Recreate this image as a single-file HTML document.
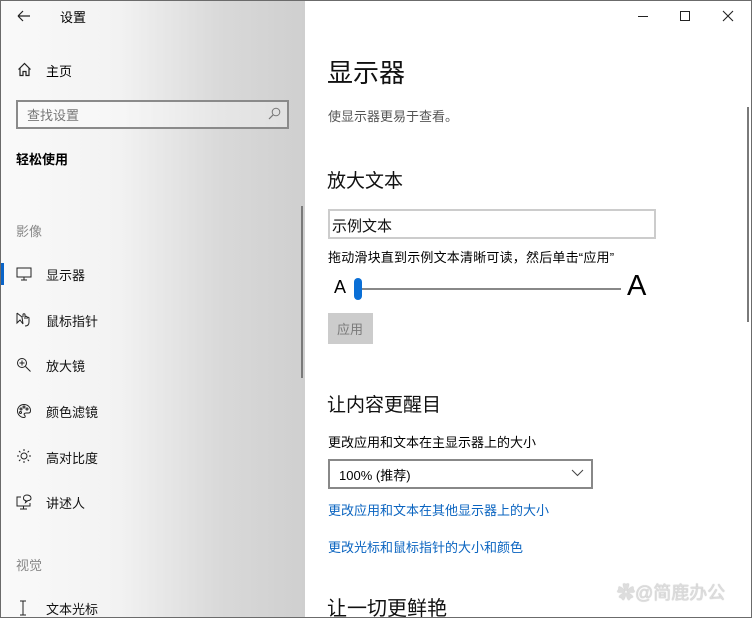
<!DOCTYPE html>
<html><head><meta charset="utf-8"><style>
*{margin:0;padding:0;box-sizing:border-box}
body{width:752px;height:618px;overflow:hidden;font-family:"Liberation Sans","Noto Sans CJK SC",sans-serif;background:#fff;position:relative;color:#000}
.frame{position:absolute;inset:0;border:1px solid #6b6b6b;z-index:10;pointer-events:none}
.side{position:absolute;left:0;top:0;width:305px;height:618px;background:linear-gradient(90deg,#fafafa 0px,#f2f2f2 120px,#d9d9d9 220px,#cfcfcf 305px)}
.t{position:absolute;white-space:nowrap}
.s13{font-size:13px}
.gray{color:#777}
.nav{position:absolute;left:46px;font-size:13px;color:#111}
.ic{position:absolute;left:16px}
</style></head><body>
<div class="frame"></div>
<div class="side"></div>
<svg class="ic" style="left:17px;top:10px" width="14" height="12" viewBox="0 0 14 12"><path d="M1 6H13M1 6L6 1M1 6L6 11" stroke="#222" stroke-width="1.2" fill="none"/></svg>
<div class="t s13" style="left:60px;top:7px">设置</div>
<svg class="ic" style="left:17px;top:62px" width="15" height="15" viewBox="0 0 15 15"><path d="M1.5 7.5L7.5 1.5L13.5 7.5M3 6V13.5H6V9.5H9V13.5H12V6" stroke="#222" stroke-width="1.2" fill="none"/></svg>
<div class="t s13" style="left:46px;top:61px">主页</div>
<div style="position:absolute;left:16px;top:100px;width:273px;height:29px;border:2px solid #8a8a8a;background:rgba(255,255,255,.35)"></div>
<div class="t s13 gray" style="left:27px;top:105px">查找设置</div>
<svg style="position:absolute;left:268px;top:107px" width="13" height="13" viewBox="0 0 13 13"><circle cx="8" cy="5" r="3.8" stroke="#777" fill="none"/><path d="M5.3 7.7L1 12" stroke="#777" stroke-width="1.2"/></svg>
<div class="t s13" style="left:16px;top:149px;font-weight:bold">轻松使用</div>
<div class="t s13 gray" style="left:16px;top:221px;color:#888">影像</div>
<div style="position:absolute;left:0;top:263px;width:4px;height:22px;background:#0a64c8"></div>
<svg class="ic" style="top:267px" width="16" height="14" viewBox="0 0 16 14"><rect x="1" y="1" width="14" height="9" stroke="#222" fill="none"/><path d="M8 10V13M5 13H11" stroke="#222"/></svg>
<div class="nav" style="top:265px">显示器</div>
<svg class="ic" style="top:312px" width="17" height="15" viewBox="0 0 17 15"><path d="M1 1L1 11L4 8L7 12L6 5L1 1M7 5V2.5C7 1.5 9 1.5 9 2.5V7M9 5C9 4 11 4 11 5V7M11 6C11 5 13 5 13 6V10C13 13 11 14 9 14" stroke="#222" fill="none"/></svg>
<div class="nav" style="top:311px">鼠标指针</div>
<svg class="ic" style="top:357px" width="16" height="16" viewBox="0 0 16 16"><circle cx="6" cy="6" r="4.5" stroke="#222" fill="none"/><path d="M9.5 9.5L14.5 14.5M6 3.5V8.5M3.5 6H8.5" stroke="#222"/></svg>
<div class="nav" style="top:356px">放大镜</div>
<svg class="ic" style="top:403px" width="16" height="16" viewBox="0 0 16 16"><path d="M8 1.5C4 1.5 1.5 4.5 1.5 8C1.5 11.5 4.5 14.5 8 14.5C9.5 14.5 9.5 13 8.5 12C7.5 11 8.5 10 10 10H12.5C14 10 14.5 9 14.5 7.5C14.5 4 11.5 1.5 8 1.5Z" stroke="#222" fill="none"/><circle cx="5" cy="6" r="1" stroke="#222" fill="none"/><circle cx="8" cy="4" r="1" stroke="#222" fill="none"/><circle cx="11" cy="6" r="1" stroke="#222" fill="none"/><circle cx="4.5" cy="9.5" r="1" stroke="#222" fill="none"/></svg>
<div class="nav" style="top:402px">颜色滤镜</div>
<svg class="ic" style="top:448px" width="16" height="16" viewBox="0 0 16 16"><circle cx="8" cy="8" r="3" stroke="#222" fill="none"/><path d="M8 1V3M8 13V15M1 8H3M13 8H15M3 3L4.4 4.4M11.6 11.6L13 13M3 13L4.4 11.6M11.6 4.4L13 3" stroke="#222"/></svg>
<div class="nav" style="top:448px">高对比度</div>
<svg class="ic" style="top:494px" width="17" height="16" viewBox="0 0 17 16"><path d="M5 3H1V12H14V9M7.5 12V15M4 15H11" stroke="#222" fill="none"/><path d="M11 1C8.5 1 7.5 2.5 7.5 4C7.5 5.5 8.5 6.5 10 6.5L9.5 8.5L12 6.5C14 6.5 15 5.5 15 4C15 2.5 13.5 1 11 1Z" stroke="#222" fill="none"/></svg>
<div class="nav" style="top:493px">讲述人</div>
<div class="t s13" style="left:16px;top:555px;color:#888">视觉</div>
<svg class="ic" style="left:18px;top:600px" width="10" height="16" viewBox="0 0 10 16"><path d="M5 1V15M2 1H8M2 15H8" stroke="#222"/></svg>
<div class="nav" style="top:599px">文本光标</div>
<div style="position:absolute;left:301px;top:206px;width:2px;height:172px;background:#7a7a7a"></div>
<div style="position:absolute;left:638px;top:16px;width:10px;height:1px;background:#222"></div>
<div style="position:absolute;left:680px;top:11px;width:10px;height:10px;border:1px solid #222"></div>
<svg style="position:absolute;left:722px;top:10px" width="12" height="12" viewBox="0 0 12 12"><path d="M1 1L11 11M11 1L1 11" stroke="#222" stroke-width="1.1"/></svg>
<div class="t" style="left:327px;top:53px;font-size:26px;color:#111">显示器</div>
<div class="t s13" style="left:328px;top:106px;color:#555">使显示器更易于查看。</div>
<div class="t" style="left:327px;top:166px;font-size:19px;color:#111">放大文本</div>
<div style="position:absolute;left:328px;top:209px;width:328px;height:30px;border:2px solid #ccc"></div>
<div class="t" style="left:332px;top:215px;font-size:15px;color:#111">示例文本</div>
<div class="t s13" style="left:328px;top:247px;letter-spacing:0.2px">拖动滑块直到示例文本清晰可读，然后单击“应用”</div>
<div class="t" style="left:334px;top:277px;font-size:18px">A</div>
<div style="position:absolute;left:357px;top:288px;width:264px;height:2px;background:#888"></div>
<div style="position:absolute;left:354px;top:278px;width:8px;height:22px;border-radius:4px;background:#0a6fd6"></div>
<div class="t" style="left:627px;top:270px;font-size:29px">A</div>
<div style="position:absolute;left:328px;top:313px;width:45px;height:31px;background:#ccc"></div>
<div class="t s13" style="left:337px;top:319px;color:#7a7a7a">应用</div>
<div class="t" style="left:327px;top:390px;font-size:19px;color:#111">让内容更醒目</div>
<div class="t s13" style="left:328px;top:432px">更改应用和文本在主显示器上的大小</div>
<div style="position:absolute;left:328px;top:459px;width:265px;height:30px;border:2px solid #888"></div>
<div class="t s13" style="left:339px;top:465px">100% (推荐)</div>
<svg style="position:absolute;left:571px;top:469px" width="13" height="8" viewBox="0 0 13 8"><path d="M1 1L6.5 6.5L12 1" stroke="#444" fill="none"/></svg>
<div class="t s13" style="left:328px;top:500px;color:#0a64c0">更改应用和文本在其他显示器上的大小</div>
<div class="t s13" style="left:328px;top:537px;color:#0a64c0">更改光标和鼠标指针的大小和颜色</div>
<div class="t" style="left:617px;top:579px;font-size:18px;color:#ddd;text-shadow:0 0 1px #999">✿@简鹿办公</div>
<div class="t" style="left:327px;top:592px;font-size:20px;color:#111">让一切更鲜艳</div>
<div style="position:absolute;left:747px;top:107px;width:2px;height:215px;background:#7a7a7a"></div>
</body></html>
